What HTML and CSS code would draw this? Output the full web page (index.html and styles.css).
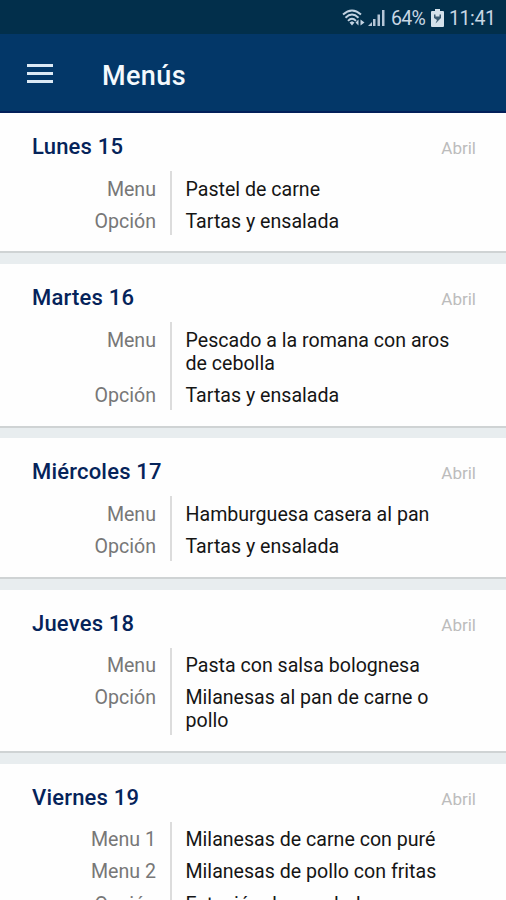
FILE: index.html
```html
<!DOCTYPE html>
<html lang="es">
<head>
    <meta charset="utf-8">
    <title>Menús</title>
    <link rel="stylesheet" href="styles.css">
</head>
<body>
    <!-- status bar -->
    <div class="status">
        <svg class="wifi" width="24" height="20" viewBox="0 0 24 20" fill="none" stroke="#c3d3e2" stroke-width="1.9">
            <path d="M1 6.500Q10 -1.500 19 6.500"/>
            <path d="M3.500 9.700Q10 3.500 16.500 9.700"/>
            <path d="M6 12.800Q10 8.800 14 12.800"/>
            <path d="M7.500 14.500L10 13.300L12.500 14.500L10 17.500Z" fill="#c3d3e2" stroke="none"/>
            <path d="M13.500 14.500L16.500 11.500V17.500ZM22.500 14.500L18.500 11.500V17.500Z" fill="#c3d3e2" stroke="none"/>
        </svg>
        <svg class="signal" width="18" height="18" viewBox="0 0 18 18" fill="#b5c6d6">
            <path d="M0 17L4 13V17Z"/>
            <rect x="5" y="10" width="2.500" height="7"/>
            <rect x="9.500" y="5.500" width="2.500" height="11.500"/>
            <rect x="14" y="1" width="2.500" height="16"/>
        </svg>
        <span class="percent">64%</span>
        <svg class="battery" width="13" height="18" viewBox="0 0 13 18">
            <path d="M4 0H9V2H12Q13 2 13 3V17Q13 18 12 18H1Q0 18 0 17V3Q0 2 1 2H4Z" fill="#d5e1ea"/>
            <path d="M3 5.500H4.500V7.500H8.500V5.500H10V9L8 11L4.500 14.500L6 11L3 9Z" fill="#3a5a70"/>
        </svg>
        <span class="clock">11:41</span>
    </div>

    <!-- title bar -->
    <div class="header">
        <div class="burger"><i></i><i></i><i></i></div>
        <h1>Menús</h1>
    </div>

    <!-- one card for each day -->
    <div class="card">
        <div class="top"><h2>Lunes 15</h2><span class="month">Abril</span></div>
        <div class="row"><span class="label">Menu</span><span class="dish">Pastel de carne</span></div>
        <div class="row"><span class="label">Opción</span><span class="dish">Tartas y ensalada</span></div>
    </div>
    <div class="card">
        <div class="top"><h2>Martes 16</h2><span class="month">Abril</span></div>
        <div class="row"><span class="label">Menu</span><span class="dish">Pescado a la romana con aros de cebolla</span></div>
        <div class="row"><span class="label">Opción</span><span class="dish">Tartas y ensalada</span></div>
    </div>
    <div class="card">
        <div class="top"><h2>Miércoles 17</h2><span class="month">Abril</span></div>
        <div class="row"><span class="label">Menu</span><span class="dish">Hamburguesa casera al pan</span></div>
        <div class="row"><span class="label">Opción</span><span class="dish">Tartas y ensalada</span></div>
    </div>
    <div class="card">
        <div class="top"><h2>Jueves 18</h2><span class="month">Abril</span></div>
        <div class="row"><span class="label">Menu</span><span class="dish">Pasta con salsa bolognesa</span></div>
        <div class="row"><span class="label">Opción</span><span class="dish">Milanesas al pan de carne o pollo</span></div>
    </div>
    <div class="card">
        <div class="top"><h2>Viernes 19</h2><span class="month">Abril</span></div>
        <div class="row"><span class="label">Menu 1</span><span class="dish">Milanesas de carne con puré</span></div>
        <div class="row"><span class="label">Menu 2</span><span class="dish">Milanesas de pollo con fritas</span></div>
        <div class="row"><span class="label">Opción</span><span class="dish">Estación de ensaladas</span></div>
    </div>
</body>
</html>
```
FILE: styles.css
```css
body {
    font-family: Roboto, sans-serif;
    background: #e8edef;
    margin: 0;
    height: 900px;
    overflow: hidden;
}

h1, h2 {
    margin: 0;
}

/* Status bar */
.status {
    box-sizing: border-box;
    display: flex;
    align-items: center;
    justify-content: flex-end;
    height: 34px;
    padding: 2px 11px 0 0;
    background: #022f4b;
    color: #c8d7e4;
    font-size: 19.5px;
}

.signal {
    margin: 0 5px 0 2px;
}

.percent {
    width: 35px;
    letter-spacing: -0.7px;
}

.battery {
    margin: 0 5px 0 5px;
}

.clock {
    width: 46px;
    white-space: nowrap;
    letter-spacing: -0.4px;
}

/* Title bar */
.header {
    box-sizing: border-box;
    display: flex;
    align-items: center;
    height: 79px;
    padding: 2px 27px 0;
    background: #033768;
    border-bottom: 2px solid #03205a;
}

.burger {
    display: flex;
    flex-direction: column;
    gap: 5px;
    width: 26px;
    margin-right: 49px;
}

.burger i {
    height: 3px;
    background: #dce9f5;
}

h1 {
    padding-top: 4px;
    color: #f4f9fd;
    font-size: 27px;
    font-weight: 500;
    letter-spacing: 0.4px;
}

/* Day cards */
.card {
    box-sizing: border-box;
    background: #fefefe;
    border-bottom: 2px solid #cfd3d4;
    padding: 18px 30px 16px 32px;
    margin-bottom: 10.800px;
}

.top {
    display: flex;
    justify-content: space-between;
    height: 40px;
    line-height: 31px;
}

h2 {
    color: #05235a;
    font-size: 22px;
    font-weight: 500;
    letter-spacing: 0.2px;
}

.month {
    color: #bcbcbc;
    font-size: 17px;
    line-height: 34px;
}

.row {
    display: flex;
    font-size: 19.600px;
    line-height: 23px;
}

.label {
    box-sizing: border-box;
    width: 124px;
    padding: 6.500px 0 2.700px;
    color: #777;
    text-align: right;
}

.dish {
    flex: 1;
    margin-left: 14px;
    padding: 6.500px 10px 2.700px 13.500px;
    border-left: 2px solid #dcdcdc;
    color: #151515;
}
```
